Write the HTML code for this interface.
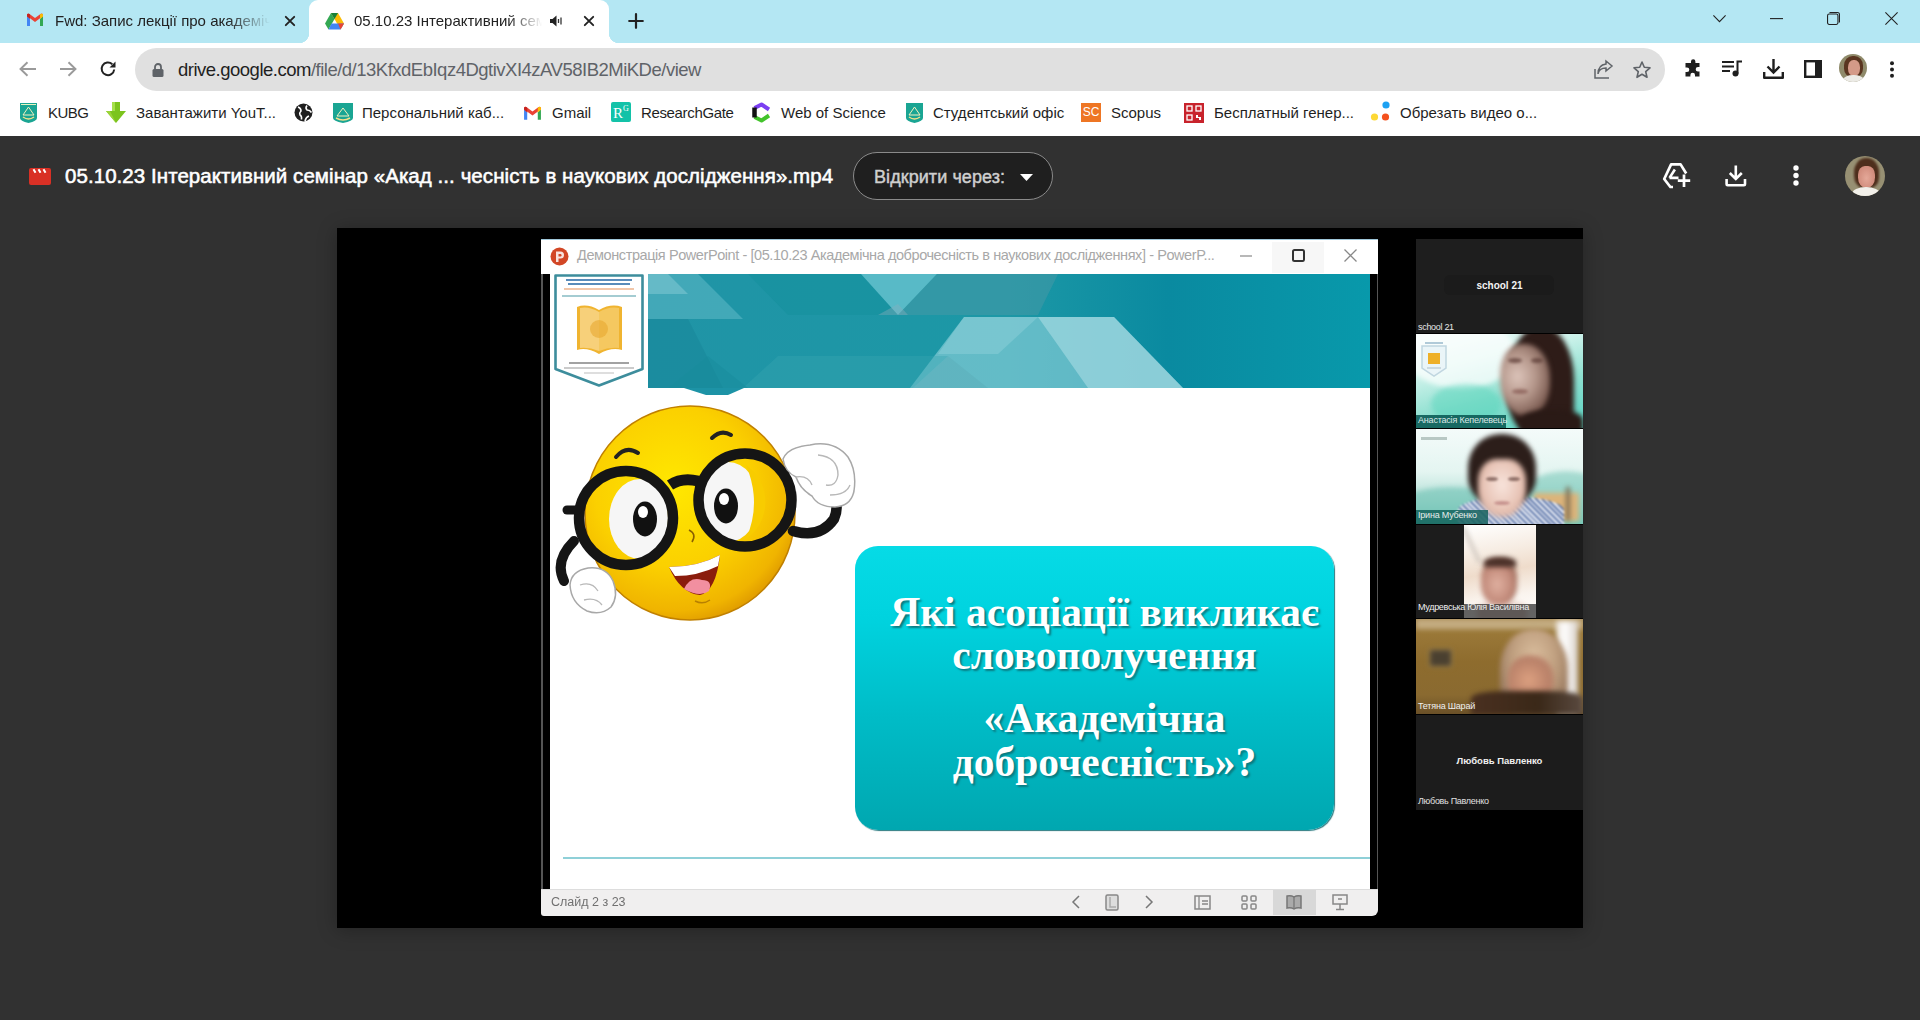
<!DOCTYPE html>
<html><head><meta charset="utf-8">
<style>
*{margin:0;padding:0;box-sizing:border-box}
html,body{width:1920px;height:1020px;overflow:hidden;background:#313131;font-family:"Liberation Sans",sans-serif}
.a{position:absolute}
svg{position:absolute;overflow:visible}
.ph{filter:blur(2.5px)}
#tabs{position:absolute;left:0;top:0;width:1920px;height:43px;background:#b4e7f3}
.tt{position:absolute;top:12px;font-size:15px;color:#222;white-space:nowrap;overflow:hidden}
#toolbar{position:absolute;left:0;top:43px;width:1920px;height:50px;background:#fff}
#omni{position:absolute;left:135px;top:5px;width:1530px;height:43px;background:#e0e0e0;border-radius:22px}
#bm{position:absolute;left:0;top:93px;width:1920px;height:43px;background:#fff}
.bt{position:absolute;top:10.5px;font-size:15px;color:#1f1f1f;white-space:nowrap}
#viewer{position:absolute;left:0;top:136px;width:1920px;height:884px;background:#313131}
#video{position:absolute;left:337px;top:228px;width:1246px;height:700px;background:#000;box-shadow:0 2px 18px rgba(0,0,0,0.28)}
#ppt{position:absolute;left:541px;top:239px;width:837px;height:677px;background:transparent;filter:blur(0.45px)}
#panel{position:absolute;left:1416px;top:239px;width:167px;height:571px;background:#000}
</style></head><body>
<div id="tabs">
  <!-- gmail tab -->
  <svg style="left:26px;top:13px" width="18" height="14" viewBox="0 0 18 14">
    <path d="M1 3 L1 13 L4 13 L4 6 Z" fill="#4285f4"/>
    <path d="M14 6 L14 13 L17 13 L17 3 Z" fill="#34a853"/>
    <path d="M1 3 L9 9 L17 3 L17 1.5 Q16 0 14.5 1 L9 5 L3.5 1 Q2 0 1 1.5 Z" fill="#ea4335"/>
    <path d="M14 6 L17 3.5 L17 1.5 Q16.5 0.3 15 0.8 L14 1.6 Z" fill="#fbbc04"/>
    <path d="M1 3.5 L4 6 L4 1.6 L3 0.8 Q1.5 0.3 1 1.5 Z" fill="#c5221f"/>
  </svg>
  <div class="tt" style="left:55px;width:215px;-webkit-mask-image:linear-gradient(90deg,#000 80%,transparent)">Fwd: Запис лекції про академічну доброчесність</div>
  <svg style="left:285px;top:16px" width="10" height="10" viewBox="0 0 10 10"><path d="M0.8 0.8L9.2 9.2M9.2 0.8L0.8 9.2" stroke="#222" stroke-width="1.9" stroke-linecap="round"/></svg>
  <!-- active tab -->
  <div class="a" style="left:309px;top:0;width:300px;height:43px;background:#fff;border-radius:9px 9px 0 0"></div>
  <div class="a" style="left:299px;top:33px;width:10px;height:10px;background:radial-gradient(circle at 0 0,transparent 10px,#fff 10.5px)"></div>
  <div class="a" style="left:609px;top:33px;width:10px;height:10px;background:radial-gradient(circle at 100% 0,transparent 10px,#fff 10.5px)"></div>
  <svg style="left:325px;top:13px" width="19" height="17" viewBox="0 0 19 17">
    <path d="M6 0 L13 0 L19 10.5 L15.5 16.5 Z" fill="#fbbc04"/>
    <path d="M6 0 L0 10.5 L3.5 16.5 L9.5 6 Z" fill="#34a853"/>
    <path d="M3.5 16.5 L15.5 16.5 L19 10.5 L6.5 10.5 Z" fill="#4285f4"/>
    <path d="M15.5 16.5 L19 10.5 L13 10.5 Z" fill="#ea4335"/>
    <path d="M6 0 L9.5 6 L13 0 Z" fill="#188038"/>
  </svg>
  <div class="tt" style="left:354px;width:188px;-webkit-mask-image:linear-gradient(90deg,#000 82%,transparent)">05.10.23 Інтерактивний семінар</div>
  <svg style="left:550px;top:15px" width="13" height="12" viewBox="0 0 13 12"><path d="M0 4H2.5L6.5 0.5V11.5L2.5 8H0Z" fill="#222"/><path d="M8.5 4V8M11 2.5V9.5" stroke="#333" stroke-width="1.3" fill="none"/></svg>
  <svg style="left:584px;top:16px" width="10" height="10" viewBox="0 0 10 10"><path d="M0.8 0.8L9.2 9.2M9.2 0.8L0.8 9.2" stroke="#222" stroke-width="1.9" stroke-linecap="round"/></svg>
  <svg style="left:628px;top:13px" width="16" height="16" viewBox="0 0 16 16"><path d="M8 1.2V14.8M1.2 8H14.8" stroke="#222" stroke-width="2.2" stroke-linecap="round"/></svg>
  <!-- window controls -->
  <svg style="left:1713px;top:15px" width="13" height="8" viewBox="0 0 13 8"><path d="M0.4 0.4L6.5 6.6L12.6 0.4" stroke="#222" stroke-width="1.1" fill="none"/></svg>
  <svg style="left:1770px;top:18px" width="13" height="2" viewBox="0 0 13 2"><path d="M0 0.6H13" stroke="#222" stroke-width="1.1"/></svg>
  <svg style="left:1827px;top:12px" width="13" height="13" viewBox="0 0 13 13"><rect x="0.55" y="2.05" width="10.4" height="10.4" rx="1.6" stroke="#222" stroke-width="1.1" fill="none"/><path d="M2.5 0.55H10.5Q12.45 0.55 12.45 2.5V10.5" stroke="#222" stroke-width="1.1" fill="none"/></svg>
  <svg style="left:1885px;top:12px" width="13" height="13" viewBox="0 0 13 13"><path d="M0.4 0.4L12.6 12.6M12.6 0.4L0.4 12.6" stroke="#222" stroke-width="1.1"/></svg>
</div>
<div id="toolbar">
  <svg style="left:19px;top:18px" width="18" height="16" viewBox="0 0 18 16"><path d="M17 8H2M8.5 1.2L1.5 8L8.5 14.8" stroke="#9a9a9a" stroke-width="1.9" fill="none"/></svg>
  <svg style="left:59px;top:18px" width="18" height="16" viewBox="0 0 18 16"><path d="M1 8H16M9.5 1.2L16.5 8L9.5 14.8" stroke="#9a9a9a" stroke-width="1.9" fill="none"/></svg>
  <svg style="left:99px;top:17px" width="18" height="18" viewBox="0 0 18 18"><path d="M15.2 9.5A6.3 6.3 0 1 1 13.3 4.3" stroke="#222" stroke-width="2" fill="none"/><path d="M16.5 1.5V7.5H10.5Z" fill="#222"/></svg>
  <div id="omni">
    <svg style="left:17px;top:15px" width="12" height="14" viewBox="0 0 12 14"><path d="M3 6V4A3 3 0 0 1 9 4V6" stroke="#5f6368" stroke-width="1.8" fill="none"/><rect x="0.5" y="6" width="11" height="8" rx="1.5" fill="#5f6368"/></svg>
    <div class="a" style="left:43px;top:11px;font-size:18.5px;letter-spacing:-0.5px;color:#1f1f1f;white-space:nowrap">drive.google.com<span style="color:#5f6368">/file/d/13KfxdEbIqz4DgtivXI4zAV58IB2MiKDe/view</span></div>
    <svg style="left:1459px;top:14px" width="19" height="17" viewBox="0 0 19 17"><path d="M1 7V16H15" stroke="#5f6368" stroke-width="1.5" fill="none"/><path d="M4 12Q5 6 12 6V9L18 4L12 -1V2Q4 3 4 12Z" stroke="#5f6368" stroke-width="1.5" fill="none"/></svg>
    <svg style="left:1498px;top:13px" width="18" height="18" viewBox="0 0 18 18"><path d="M9 1L11.3 6.2L17 6.8L12.7 10.6L14 16.3L9 13.3L4 16.3L5.3 10.6L1 6.8L6.7 6.2Z" stroke="#5f6368" stroke-width="1.6" fill="none" stroke-linejoin="round"/></svg>
  </div>
  <svg style="left:1684px;top:16px" width="19" height="19" viewBox="0 0 19 19"><path d="M7 2.5A2.2 2.2 0 0 1 11.4 2.5V4H15.5V8H14A2.3 2.3 0 0 0 14 12.6H15.5V17.5H11V16A2.3 2.3 0 0 0 6.4 16V17.5H1.5V13H3A2.3 2.3 0 0 0 3 8.4H1.5V4H7Z" fill="#1f1f1f"/></svg>
  <svg style="left:1722px;top:17px" width="21" height="17" viewBox="0 0 21 17"><path d="M0 2H12M0 6.5H12M0 11H8" stroke="#1f1f1f" stroke-width="2"/><circle cx="13.5" cy="13.5" r="3" fill="#1f1f1f"/><path d="M15.5 13.5V1.5H20" stroke="#1f1f1f" stroke-width="2" fill="none"/></svg>
  <svg style="left:1763px;top:16px" width="21" height="20" viewBox="0 0 21 20"><path d="M10.5 0V13M4.5 7.5L10.5 13.5L16.5 7.5" stroke="#1f1f1f" stroke-width="2.4" fill="none"/><path d="M1.2 13V18.8H19.8V13" stroke="#1f1f1f" stroke-width="2.4" fill="none" stroke-linejoin="round"/></svg>
  <svg style="left:1804px;top:17px" width="18" height="18" viewBox="0 0 18 18"><rect x="1.2" y="1.2" width="15.6" height="15.6" stroke="#1f1f1f" stroke-width="2.4" fill="none"/><rect x="11" y="1" width="6" height="16" fill="#1f1f1f"/></svg>
  <div class="a" style="left:1839px;top:11px;width:28px;height:28px;border-radius:50%;overflow:hidden;background:#8f8a6a">
    <div class="a" style="left:5px;top:2px;width:19px;height:21px;border-radius:45% 45% 40% 40%;background:#5a3520"></div>
    <div class="a" style="left:8.5px;top:6px;width:12px;height:16px;border-radius:45%;background:#d49a88"></div>
    <div class="a" style="left:4px;top:21px;width:21px;height:10px;border-radius:50% 50% 0 0;background:#ecebe6"></div>
  </div>
  <svg style="left:1889px;top:18px" width="6" height="17" viewBox="0 0 6 17"><circle cx="3" cy="2.2" r="2" fill="#1f1f1f"/><circle cx="3" cy="8.5" r="2" fill="#1f1f1f"/><circle cx="3" cy="14.8" r="2" fill="#1f1f1f"/></svg>
</div>
<div id="bm">
  <svg style="left:20px;top:10px" width="18" height="20" viewBox="0 0 18 20"><path d="M0 0H17V15Q17 18 8.5 20Q0 18 0 15Z" fill="#1aa593"/><path d="M8.5 4L14 12H3Z" stroke="#f4f0c0" stroke-width="1" fill="none"/><path d="M3 14Q8.5 18 14 14" stroke="#f4e08a" stroke-width="1.5" fill="none"/><path d="M1 1.5H16" stroke="#e9f3c0" stroke-width="1"/></svg>
  <div class="bt" style="left:48px;letter-spacing:-0.5px">KUBG</div>
  <svg style="left:106px;top:9px" width="20" height="21" viewBox="0 0 20 21"><path d="M6 0H14V9H20L10 21L0 9H6Z" fill="#7cc41d"/><path d="M6 0H9V9H6Z" fill="#a6e04b"/><path d="M10 21L0 9H4Z" fill="#9bd43a"/></svg>
  <div class="bt" style="left:136px">Завантажити YouT...</div>
  <svg style="left:294px;top:10px" width="19" height="19" viewBox="0 0 19 19"><circle cx="9.5" cy="9.5" r="9" fill="#1f1f1f"/><path d="M4 4Q7 5 7 8Q5 10 6 12Q8 13 7.5 16.5M13 2.5Q11 5 13 7Q16 7 17.5 9.5M11 18Q12 14 15 13" stroke="#fff" stroke-width="1.6" fill="none"/></svg>
  <svg style="left:333px;top:10px" width="20" height="20" viewBox="0 0 20 20"><path d="M0 0H20V15Q20 18 10 20Q0 18 0 15Z" fill="#1aa593"/><path d="M10 5L16 13H4Z" stroke="#f4f0c0" stroke-width="1" fill="none"/><path d="M3 15Q10 19 17 15" stroke="#f4e08a" stroke-width="1.5" fill="none"/></svg>
  <div class="bt" style="left:362px">Персональний каб...</div>
  <svg style="left:523px;top:13px" width="19" height="15" viewBox="0 0 18 14">
    <path d="M1 3 L1 13 L4 13 L4 6 Z" fill="#4285f4"/>
    <path d="M14 6 L14 13 L17 13 L17 3 Z" fill="#34a853"/>
    <path d="M1 3 L9 9 L17 3 L17 1.5 Q16 0 14.5 1 L9 5 L3.5 1 Q2 0 1 1.5 Z" fill="#ea4335"/>
    <path d="M14 6 L17 3.5 L17 1.5 Q16.5 0.3 15 0.8 L14 1.6 Z" fill="#fbbc04"/>
    <path d="M1 3.5 L4 6 L4 1.6 L3 0.8 Q1.5 0.3 1 1.5 Z" fill="#c5221f"/>
  </svg>
  <div class="bt" style="left:552px">Gmail</div>
  <div class="a" style="left:611px;top:9px;width:20px;height:20px;background:#13c2a8;border-radius:2px;color:#fff;font-family:'Liberation Serif',serif;font-size:15px;line-height:22px;padding-left:2px">R<span style="font-size:8px;position:relative;top:-7px">G</span></div>
  <div class="bt" style="left:641px;letter-spacing:-0.35px">ResearchGate</div>
  <svg style="left:751px;top:9px" width="21" height="21" viewBox="0 0 21 21"><path d="M3.5 6L10.5 2.5L18 7.5" stroke="#7b3ff2" stroke-width="4" fill="none" stroke-linejoin="round"/><path d="M3.5 15L10.5 18.5L18 13.5" stroke="#43c32c" stroke-width="4" fill="none" stroke-linejoin="round"/><path d="M3.5 5.5V15.5" stroke="#111" stroke-width="4.5"/></svg>
  <div class="bt" style="left:781px">Web of Science</div>
  <svg style="left:906px;top:10px" width="18" height="20" viewBox="0 0 18 20"><path d="M0 0H17V15Q17 18 8.5 20Q0 18 0 15Z" fill="#1aa593"/><path d="M8.5 4L14 12H3Z" stroke="#f4f0c0" stroke-width="1" fill="none"/><path d="M3 14Q8.5 18 14 14" stroke="#f4e08a" stroke-width="1.5" fill="none"/></svg>
  <div class="bt" style="left:933px">Студентський офіс</div>
  <div class="a" style="left:1081px;top:10px;width:20px;height:19px;background:#ee7624;color:#fff;font-size:12px;line-height:19px;text-align:center">SC</div>
  <div class="bt" style="left:1111px">Scopus</div>
  <svg style="left:1184px;top:10px" width="20" height="20" viewBox="0 0 20 20"><rect width="20" height="20" fill="#c8232c"/><g fill="none" stroke="#fff" stroke-width="1.3"><rect x="3" y="3" width="5" height="5"/><rect x="12" y="3" width="5" height="5"/><rect x="3" y="12" width="5" height="5"/></g><path d="M12 12H14V14H17V17H15V15H12Z" fill="#fff"/></svg>
  <div class="bt" style="left:1214px">Бесплатный генер...</div>
  <svg style="left:1370px;top:8px" width="21" height="21" viewBox="0 0 21 21"><circle cx="16" cy="4" r="3.6" fill="#1da1f2"/><circle cx="4.5" cy="16" r="3.6" fill="#fdd835"/><circle cx="15.5" cy="16" r="3.6" fill="#f4511e"/></svg>
  <div class="bt" style="left:1400px">Обрезать видео о...</div>
</div>
<div id="viewer">
  <svg style="left:29px;top:32px" width="22" height="17" viewBox="0 0 22 17"><rect x="0" y="0" width="22" height="17" rx="2" fill="#d93025"/><path d="M4.5 1.2L6.5 4.8M9.5 1.2L11.5 4.8M14.5 1.2L16.5 4.8" stroke="#fff" stroke-width="2"/><path d="M0 5.5H22" stroke="#d93025" stroke-width="0.5"/></svg>
  <div class="a" style="left:65px;top:27.5px;font-size:20.5px;letter-spacing:0.06px;font-weight:normal;-webkit-text-stroke:0.55px #fff;color:#fff;white-space:nowrap">05.10.23 Інтерактивний семінар «Акад ... чесність в наукових дослідження».mp4</div>
  <div class="a" style="left:853px;top:16px;width:200px;height:48px;border:1px solid #8a8a8a;border-radius:24px;background:#1f1f1f"></div>
  <div class="a" style="left:874px;top:31px;font-size:18px;letter-spacing:0.07px;font-weight:normal;-webkit-text-stroke:0.45px #cfcfcf;color:#cfcfcf;white-space:nowrap">Відкрити через:</div>
  <svg style="left:1020px;top:38px" width="13" height="7" viewBox="0 0 13 7"><path d="M0 0H13L6.5 7Z" fill="#fff"/></svg>
  <svg style="left:1663px;top:27px" width="28" height="25" viewBox="0 0 28 25"><path d="M10 24H7.4L1.2 16L8.1 1.4H17.6L23.2 10.5" stroke="#fff" stroke-width="2.7" fill="none" stroke-linejoin="round"/><path d="M6.5 14.9H15.5M11.9 6.5L6.5 14.9" stroke="#fff" stroke-width="2.6" fill="none"/><path d="M21 11.5V24M14.8 17.7H27.2" stroke="#fff" stroke-width="2.7"/></svg>
  <svg style="left:1725px;top:29px" width="22" height="22" viewBox="0 0 22 22"><path d="M10.8 0.5V14M4.8 8L10.8 14L16.8 8" stroke="#fff" stroke-width="2.6" fill="none"/><path d="M1.6 14V19.2Q1.6 20.2 2.6 20.2H19Q20 20.2 20 19.2V14" stroke="#fff" stroke-width="2.6" fill="none"/></svg>
  <svg style="left:1793px;top:29px" width="6" height="22" viewBox="0 0 6 22"><circle cx="3" cy="3" r="2.7" fill="#fff"/><circle cx="3" cy="10.5" r="2.7" fill="#fff"/><circle cx="3" cy="18" r="2.7" fill="#fff"/></svg>
  <div class="a" style="left:1845px;top:20px;width:40px;height:40px;border-radius:50%;overflow:hidden;background:#979073">
    <div class="a" style="left:9px;top:2px;width:25px;height:30px;border-radius:48% 48% 35% 40%;background:#4e2e1c;filter:blur(0.8px)"></div>
    <div class="a" style="left:13px;top:10px;width:17px;height:22px;border-radius:40% 40% 48% 48%;background:radial-gradient(ellipse at 50% 55%,#e4a898,#c88070);filter:blur(0.6px)"></div>
    <div class="a" style="left:7px;top:31px;width:28px;height:14px;border-radius:50% 50% 0 0;background:#f2f0ea"></div>
  </div>
</div>
<div id="video"></div>
<div id="ppt">
  <!-- title bar -->
  <div class="a" style="left:0;top:0;width:837px;height:35px;background:#fff;border-top:1px solid #9fc6d8"></div>
  <svg style="left:9px;top:8px" width="20" height="19" viewBox="0 0 20 19"><circle cx="9.5" cy="9.5" r="9" fill="#d24726"/><path d="M6 4.5H10.5Q14 4.5 14 8Q14 11.5 10.5 11.5H8.5V15H6Z" fill="#fff" opacity="0.85"/><path d="M8.5 7V9.5H10.5Q11.5 9.5 11.5 8.2Q11.5 7 10.5 7Z" fill="#d24726"/></svg>
  <div class="a" style="left:36px;top:8px;font-size:14.5px;color:#a8a8a8;white-space:nowrap;letter-spacing:-0.42px">Демонстрація PowerPoint - [05.10.23 Академічна доброчесність в наукових дослідженнях] - PowerP...</div>
  <svg style="left:699px;top:16px" width="12" height="2" viewBox="0 0 12 2"><path d="M0 1H12" stroke="#a0a0a0" stroke-width="1.5"/></svg>
  <div class="a" style="left:731px;top:3px;width:52px;height:31px;background:#f7f7f7"></div>
  <svg style="left:751px;top:10px" width="13" height="13" viewBox="0 0 13 13"><rect x="1" y="1" width="11" height="11" rx="1.5" stroke="#333" stroke-width="2" fill="none"/></svg>
  <svg style="left:803px;top:10px" width="13" height="13" viewBox="0 0 13 13"><path d="M0.5 0.5L12.5 12.5M12.5 0.5L0.5 12.5" stroke="#888" stroke-width="1.3"/></svg>
  <!-- slide area -->
  <div class="a" style="left:0;top:35px;width:9px;height:615px;background:#000;border-left:2px solid #555"></div>
  <div class="a" style="left:829px;top:35px;width:8px;height:615px;background:#000;border-right:1px solid #555"></div>
  <div class="a" id="slide" style="left:9px;top:35px;width:820px;height:615px;background:#fff;overflow:hidden">
    <!-- teal band -->
    <svg style="left:98px;top:0" width="722" height="122" viewBox="0 0 722 122">
      <defs><linearGradient id="bandg" x1="0" x2="1" y1="0" y2="0"><stop offset="0" stop-color="#2094a6"/><stop offset="0.5" stop-color="#1c98a6"/><stop offset="0.72" stop-color="#0a8aa0"/><stop offset="1" stop-color="#0899ab"/></linearGradient></defs>
      <rect x="0" y="0" width="722" height="114" fill="url(#bandg)"/>
      <path d="M0 0H50L95 45H0Z" fill="#6cc0cf" opacity="0.45"/>
      <path d="M0 0H20L40 20H0Z" fill="#9ad4de" opacity="0.4"/>
      <path d="M0 45L40 45L75 114H0Z" fill="#137f92" opacity="0.35"/>
      <path d="M100 0H213L250 41H140Z" fill="#13909c" opacity="0.5"/>
      <path d="M213 0H289L250 41Z" fill="#6cc6d2" opacity="0.75"/>
      <path d="M289 0H410L390 41H250Z" fill="#4f98a6" opacity="0.45"/>
      <path d="M230 41L250 30L260 41Z" fill="#8ab0bd" opacity="0.4"/>
      <path d="M316 43H466L535 114H262Z" fill="#8fd2dc" opacity="0.62"/>
      <path d="M390 43H466L535 114H440Z" fill="#b8e4ea" opacity="0.5"/>
      <path d="M316 43H390L350 80H290Z" fill="#a8dde4" opacity="0.3"/>
      <path d="M130 82H300L265 114H95Z" fill="#36a4b2" opacity="0.4"/>
      <path d="M60 82L100 114H20Z" fill="#178c9c" opacity="0.5"/>
      <path d="M300 82L340 114H265Z" fill="#5aa8b5" opacity="0.35"/>
      <path d="M36 114L58 121H80L96 114Z" fill="#1d93a6"/>
    </svg>
    <!-- shield logo -->
    <svg style="left:4px;top:0" width="92" height="114" viewBox="0 0 92 114">
      <path d="M1.5 1.5H88.5V95L45 111.5L1.5 95Z" fill="#fff" stroke="#3d8d9c" stroke-width="2.6" stroke-linejoin="round"/>
      <path d="M12 6H78M14 10H76" stroke="#2f6faa" stroke-width="2.2" opacity="0.8"/>
      <path d="M10 15H80" stroke="#e8a070" stroke-width="1.4" opacity="0.8"/>
      <path d="M8 22H82" stroke="#4a9aa5" stroke-width="1.2"/>
      <path d="M23 33Q33 29 45 36Q57 29 68 33V76Q57 73 45 80Q33 73 23 76Z" fill="#f0b430"/>
      <path d="M26 34Q35 32 45 38V77Q35 73 26 74Z" fill="#f7d07a"/>
      <path d="M45 38Q55 32 65 34V74Q55 73 45 77Z" fill="#f5c860"/>
      <circle cx="45" cy="55" r="9" fill="#e8a930" opacity="0.6"/>
      <path d="M15 89H75" stroke="#333" stroke-width="1.5" opacity="0.6"/>
      <path d="M10 94H80" stroke="#333" stroke-width="1.1" opacity="0.5"/>
      <path d="M30 99H60" stroke="#333" stroke-width="0.8" opacity="0.4"/>
    </svg>
    <!-- emoji -->
    <svg id="emoji" style="left:0;top:121px" width="320" height="240" viewBox="0 0 320 240">
      <defs>
        <radialGradient id="face" cx="0.42" cy="0.38" r="0.68"><stop offset="0" stop-color="#ffe800"/><stop offset="0.55" stop-color="#fbd000"/><stop offset="0.85" stop-color="#f0b400"/><stop offset="1" stop-color="#d89000"/></radialGradient>
      </defs>
      <path d="M24 146Q4 166 14 186" stroke="#151515" stroke-width="10" fill="none" stroke-linecap="round"/>
      <ellipse cx="140" cy="118" rx="105" ry="107" fill="url(#face)" stroke="#c08000" stroke-width="1.5"/>
      <path d="M66 62Q76 50 88 58" stroke="#222" stroke-width="4" fill="none" stroke-linecap="round"/>
      <path d="M162 43Q171 34 181 40" stroke="#222" stroke-width="4" fill="none" stroke-linecap="round"/>
      <ellipse cx="90" cy="124" rx="31" ry="40" fill="#f6f6f6"/>
      <ellipse cx="178" cy="107" rx="31" ry="40" fill="#f6f6f6"/>
      <path d="M112 92A45 45 0 0 1 112 154Q124 124 112 92Z" fill="#f8cc00"/>
      <path d="M196 70A45 45 0 0 1 196 144Q212 108 196 70Z" fill="#f8cc00"/>
      <ellipse cx="95" cy="124" rx="12" ry="17.5" fill="#111"/>
      <ellipse cx="93" cy="117" rx="5" ry="6" fill="#fff"/>
      <ellipse cx="176" cy="111" rx="12" ry="17.5" fill="#111"/>
      <ellipse cx="174" cy="104" rx="5" ry="6" fill="#fff"/>
      <path d="M139 135Q147 139 142 147" stroke="#8a6000" stroke-width="1.6" fill="none"/>
      <path d="M119 172Q148 172 170 160Q166 196 150 200Q130 198 119 172Z" fill="#8a1c0c"/>
      <path d="M119 172Q148 172 170 160L168 171Q148 181 125 181Z" fill="#fff"/>
      <path d="M134 194Q140 181 152 185Q163 185 159 196Q150 203 134 194Z" fill="#f28fa0"/>
      <path d="M145 206Q153 210 160 205" stroke="#b88000" stroke-width="1.5" fill="none"/>
      <circle cx="76" cy="123" r="47" stroke="#151515" stroke-width="10.5" fill="none"/>
      <circle cx="195" cy="105" r="46.5" stroke="#151515" stroke-width="10.5" fill="none"/>
      <path d="M120 90Q132 82 148 86" stroke="#151515" stroke-width="11" fill="none"/>
      <path d="M27 115H17" stroke="#151515" stroke-width="9" stroke-linecap="round"/>
      <path d="M240 74H248" stroke="#151515" stroke-width="9" stroke-linecap="round"/>
      <path d="M243 136Q270 144 284 124Q290 110 282 100" stroke="#151515" stroke-width="10.5" fill="none" stroke-linecap="round"/>
      <path d="M233 64Q238 52 260 50Q284 45 298 62Q307 76 304 96Q301 111 285 112Q268 112 262 101Q250 94 246 82Q235 77 233 64Z" fill="#fff" stroke="#a8a8a8" stroke-width="1.5"/>
      <path d="M268 60Q288 62 288 80Q286 92 276 90M246 82Q258 80 262 90M280 100Q296 100 300 90" stroke="#b8b8b8" stroke-width="1.4" fill="none"/>
      <path d="M20 190Q21 176 38 173Q56 171 63 186Q69 201 61 212Q51 221 37 216Q21 208 20 190Z" fill="#fff" stroke="#a8a8a8" stroke-width="1.5"/>
      <path d="M30 190Q42 186 48 196M34 205Q46 202 52 210" stroke="#b8b8b8" stroke-width="1.3" fill="none"/>
    </svg>
    <!-- question box -->
    <div class="a" style="left:305px;top:272px;width:479px;height:284px;border-radius:23px 23px 26px 23px;background:linear-gradient(180deg,#06dbe6 0%,#00d3df 25%,#00bcc7 60%,#00a7b0 100%);box-shadow:1px 1px 1px #2b7a80"></div>
    <div class="a" style="left:315px;top:316.6px;width:479px;text-align:center;font-family:'Liberation Serif',serif;font-weight:bold;color:#fff;font-size:41.5px;line-height:43.6px;text-shadow:2px 2px 2px #0a7a80">Які асоціації викликає<br>словополучення</div>
    <div class="a" style="left:315px;top:421.8px;width:479px;text-align:center;font-family:'Liberation Serif',serif;font-weight:bold;color:#fff;font-size:41.5px;line-height:44.2px;text-shadow:2px 2px 2px #0a7a80">«Академічна<br>доброчесність»?</div>
    <!-- bottom line -->
    <div class="a" style="left:13px;top:583px;width:807px;height:2px;background:#8fd0d8"></div>
  </div>
  <!-- status bar -->
  <div class="a" style="left:0;top:650px;width:837px;height:27px;background:#f0efef;border-top:1px solid #ddd;border-radius:0 0 6px 3px"></div>
  <div class="a" style="left:10px;top:656px;font-size:12.5px;color:#707070">Слайд 2 з 23</div>
  <svg style="left:531px;top:656px" width="8" height="14" viewBox="0 0 8 14"><path d="M7 1L1 7L7 13" stroke="#777" stroke-width="1.5" fill="none"/></svg>
  <svg style="left:564px;top:655px" width="14" height="17" viewBox="0 0 14 17"><rect x="1" y="1" width="12" height="15" rx="1.5" stroke="#888" stroke-width="1.5" fill="#ddd"/><path d="M5 3V13H11" stroke="#aaa" stroke-width="1.5" fill="none"/></svg>
  <svg style="left:604px;top:656px" width="8" height="14" viewBox="0 0 8 14"><path d="M1 1L7 7L1 13" stroke="#777" stroke-width="1.5" fill="none"/></svg>
  <svg style="left:653px;top:656px" width="17" height="15" viewBox="0 0 17 15"><rect x="1" y="1" width="15" height="13" stroke="#888" stroke-width="1.5" fill="none"/><path d="M5 1V14M8 6H14M8 9H14" stroke="#888" stroke-width="1.3"/></svg>
  <svg style="left:700px;top:656px" width="16" height="15" viewBox="0 0 16 15"><g stroke="#888" stroke-width="1.5" fill="none"><rect x="1" y="1" width="5" height="5" rx="1"/><rect x="10" y="1" width="5" height="5" rx="1"/><rect x="1" y="9" width="5" height="5" rx="1"/><rect x="10" y="9" width="5" height="5" rx="1"/></g></svg>
  <div class="a" style="left:732px;top:651px;width:43px;height:25px;background:#d8d8d8"></div>
  <svg style="left:745px;top:655px" width="16" height="16" viewBox="0 0 16 16"><path d="M1 2Q5 1 8 3Q11 1 15 2V14Q11 13 8 15Q5 13 1 14Z" stroke="#777" stroke-width="1.5" fill="#aaa"/><path d="M8 3V15" stroke="#777" stroke-width="1.3"/></svg>
  <svg style="left:791px;top:655px" width="16" height="17" viewBox="0 0 16 17"><rect x="1" y="1" width="14" height="9" stroke="#888" stroke-width="1.5" fill="none"/><path d="M8 10V15M4 15.5H12M6 5H10" stroke="#888" stroke-width="1.5"/></svg>
</div>
<div id="panel">
  <!-- tile1 -->
  <div class="a" style="left:0;top:0;width:167px;height:94px;background:#1e1e1e"></div>
  <div class="a" style="left:28px;top:36px;width:110px;height:20px;background:#1b1b1b;border-radius:6px"></div>
  <div class="a" style="left:0;top:41px;width:167px;text-align:center;font-size:10px;font-weight:bold;color:#f4f4f4">school 21</div>
  <div class="a" style="left:2px;top:83px;font-size:9px;color:#e6e6e6;letter-spacing:-0.3px">school 21</div>
  <!-- tile2 -->
  <div class="a" style="left:0;top:95px;width:167px;height:94px;overflow:hidden;background:linear-gradient(165deg,#f2fcfa 0%,#d0f3ec 30%,#8ee0d0 62%,#5ad3c2 100%)">
    <div class="a ph" style="left:-10px;top:-15px;width:110px;height:70px;border-radius:50%;background:rgba(255,255,255,0.7)"></div>
    <div class="a ph" style="left:15px;top:50px;width:70px;height:40px;border-radius:50%;background:rgba(80,210,185,0.45)"></div>
    <svg style="left:5px;top:6px" width="26" height="38" viewBox="0 0 26 38"><path d="M1 6H25V28L13 36L1 28Z" fill="#eaf5f8" stroke="#c0d6e0" stroke-width="1.5"/><rect x="7" y="13" width="12" height="11" fill="#eeb028"/><path d="M4 3H22" stroke="#b0cad8" stroke-width="2"/><path d="M6 28H20" stroke="#c0d0d8" stroke-width="1.5"/></svg>
    <div class="a ph" style="left:92px;top:-8px;width:66px;height:108px;border-radius:50% 50% 25% 35%;background:#2e1c18"></div>
    <div class="a ph" style="left:84px;top:10px;width:50px;height:72px;border-radius:42% 48% 45% 50%;background:radial-gradient(ellipse at 35% 45%,#dcc4ba 0%,#b4968a 40%,#7a5a50 75%,#4a302a 100%)"></div>
    <div class="a ph" style="left:105px;top:76px;width:62px;height:24px;background:#2a1a16;border-radius:40% 40% 0 0"></div>
    <div class="a" style="left:92px;top:24px;width:14px;height:5px;border-radius:50%;background:#5a3a34;opacity:0.7;filter:blur(1.5px)"></div><div class="a" style="left:115px;top:24px;width:12px;height:5px;border-radius:50%;background:#5a3a34;opacity:0.7;filter:blur(1.5px)"></div><div class="a" style="left:96px;top:55px;width:16px;height:5px;border-radius:50%;background:#7a4a44;opacity:0.6;filter:blur(1.5px)"></div>
    <div class="a" style="left:0;top:81px;width:90px;height:13px;background:#0c5c56;opacity:0.9"></div>
    <div class="a" style="left:2px;top:81px;font-size:9px;color:#dde8e6;letter-spacing:-0.2px;white-space:nowrap">Анастасія Кепелевець</div>
  </div>
  <!-- tile3 -->
  <div class="a" style="left:0;top:190px;width:167px;height:95px;overflow:hidden;background:linear-gradient(180deg,#f4fbfa 0%,#e4f5f1 45%,#b4e0d7 75%,#80ccbe 100%)">
    <div class="a ph" style="left:-30px;top:58px;width:130px;height:60px;border-radius:50%;background:rgba(100,190,175,0.55)"></div>
    <div class="a ph" style="left:100px;top:42px;width:100px;height:70px;border-radius:50%;background:rgba(110,195,180,0.5)"></div>
    <div class="a" style="left:5px;top:8px;width:26px;height:3px;background:#b8c8c4"></div>
    <div class="a ph" style="left:118px;top:64px;width:45px;height:28px;background:#dcb47a"></div>
    <div class="a ph" style="left:150px;top:58px;width:4px;height:34px;background:#7a6a50"></div>
    <div class="a" style="left:42px;top:68px;width:106px;height:30px;border-radius:45% 45% 0 0;background:repeating-linear-gradient(45deg,#f4f6fc 0 2px,#5a74a8 2px 4px),#8aa0c8;filter:blur(0.9px)"></div>
    <div class="a ph" style="left:52px;top:5px;width:68px;height:70px;border-radius:48% 48% 38% 38%;background:#2c1e1a"></div>
    <div class="a ph" style="left:62px;top:30px;width:48px;height:58px;border-radius:38% 38% 48% 48%;background:radial-gradient(ellipse at 50% 45%,#f8e4dc 0%,#e8c4b6 55%,#c89c8c 95%)"></div>
    <div class="a" style="left:70px;top:48px;width:12px;height:4px;border-radius:50%;background:#6a4a44;opacity:0.7;filter:blur(1.3px)"></div><div class="a" style="left:92px;top:48px;width:12px;height:4px;border-radius:50%;background:#6a4a44;opacity:0.7;filter:blur(1.3px)"></div><div class="a" style="left:78px;top:72px;width:16px;height:4px;border-radius:50%;background:#b07070;opacity:0.6;filter:blur(1.3px)"></div>
    <div class="a" style="left:0;top:81px;width:72px;height:14px;background:#0c5c56;opacity:0.8"></div>
    <div class="a" style="left:2px;top:81px;font-size:9px;color:#e4ecea;letter-spacing:-0.2px;white-space:nowrap">Ірина Мубенко</div>
  </div>
  <!-- tile4 -->
  <div class="a" style="left:0;top:286px;width:167px;height:93px;background:#1c1c1c;overflow:hidden">
    <div class="a" style="left:48px;top:0;width:72px;height:93px;overflow:hidden;background:linear-gradient(170deg,#ffffff 0%,#f6ece2 30%,#efdccb 50%,#faf4ee 75%,#ffffff 100%)">
      <div class="a ph" style="left:6px;top:0;width:3px;height:40px;background:#c8c0b8;transform:rotate(-25deg)"></div>
      <div class="a ph" style="left:13px;top:76px;width:50px;height:20px;border-radius:40% 40% 0 0;background:#ead4cc"></div>
      <div class="a ph" style="left:17px;top:34px;width:36px;height:46px;border-radius:42% 42% 45% 45%;background:radial-gradient(ellipse at 45% 55%,#e0b0a0 0%,#c08878 55%,#6a4030 95%)"></div>
      <div class="a ph" style="left:20px;top:32px;width:32px;height:10px;border-radius:50% 50% 0 0;background:#4a3028"></div>
    </div>
    <div class="a" style="left:48px;top:79px;width:72px;height:14px;background:rgba(40,40,40,0.72)"></div>
    <div class="a" style="left:2px;top:77px;font-size:9px;color:#f0f0f0;letter-spacing:-0.3px;white-space:nowrap">Мудревська Юлія Василівна</div>
  </div>
  <!-- tile5 -->
  <div class="a" style="left:0;top:380px;width:167px;height:95px;overflow:hidden;background:linear-gradient(180deg,#a08450 0%,#9a7838 15%,#8e6c2e 45%,#8a6a30 80%,#6a5028 100%)">
    <div class="a ph" style="left:0;top:0;width:167px;height:10px;background:#c4ac80"></div>
    <div class="a ph" style="left:13px;top:30px;width:23px;height:18px;background:#4a4030;border:1px solid #a89060"></div>
    <div class="a ph" style="left:140px;top:2px;width:22px;height:92px;background:linear-gradient(90deg,#e8e0d8,#ffffff 40%,#d8d0c8)"></div>
    <div class="a ph" style="left:84px;top:10px;width:68px;height:82px;border-radius:48% 48% 30% 30%;background:radial-gradient(ellipse at 50% 38%,#dcc0a0 0%,#c0a080 45%,#9a7a60 80%)"></div>
    <div class="a ph" style="left:92px;top:36px;width:46px;height:50px;border-radius:45%;background:radial-gradient(ellipse at 45% 50%,#dca080 0%,#b88068 60%,rgba(140,100,80,0))"></div>
    <div class="a ph" style="left:55px;top:72px;width:112px;height:24px;border-radius:30% 30% 0 0;background:linear-gradient(90deg,#4a3020,#3a2818 60%,#5a4a40)"></div>
    <div class="a" style="left:2px;top:82px;font-size:9px;color:#f0f0f0;letter-spacing:-0.2px;white-space:nowrap">Тетяна Шарай</div>
  </div>
  <!-- tile6 -->
  <div class="a" style="left:0;top:476px;width:167px;height:95px;background:#1c1c1c"></div>
  <div class="a" style="left:0;top:516px;width:167px;text-align:center;font-size:9.5px;font-weight:bold;color:#f0f0f0">Любовь Павленко</div>
  <div class="a" style="left:2px;top:557px;font-size:9px;color:#e0e0e0;letter-spacing:-0.3px;white-space:nowrap">Любовь Павленко</div>
</div>
</body></html>
